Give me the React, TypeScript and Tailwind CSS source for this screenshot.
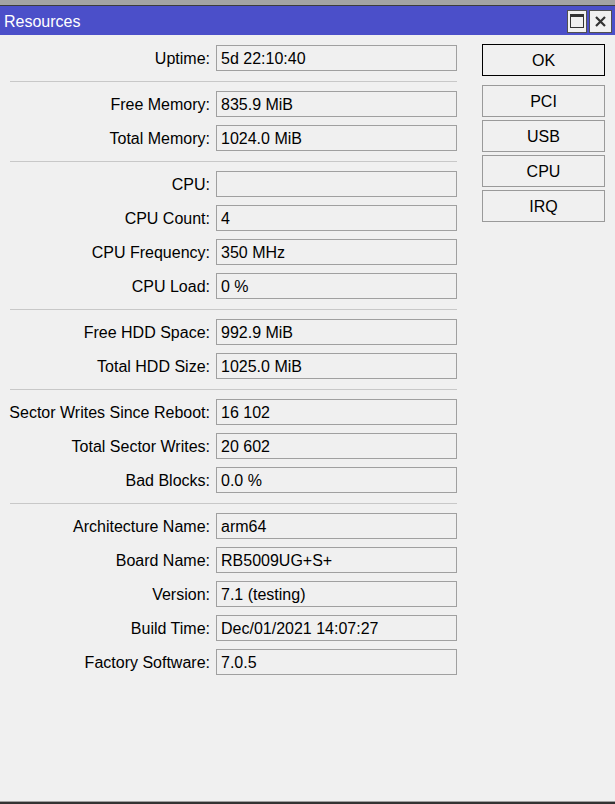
import React from 'react'

type Row = { label: string; value: string }

// groups are split by an etched separator line
const groups: Row[][] = [
  [{ label: 'Uptime', value: '5d 22:10:40' }],
  [
    { label: 'Free Memory', value: '835.9 MiB' },
    { label: 'Total Memory', value: '1024.0 MiB' },
  ],
  [
    { label: 'CPU', value: '' },
    { label: 'CPU Count', value: '4' },
    { label: 'CPU Frequency', value: '350 MHz' },
    { label: 'CPU Load', value: '0 %' },
  ],
  [
    { label: 'Free HDD Space', value: '992.9 MiB' },
    { label: 'Total HDD Size', value: '1025.0 MiB' },
  ],
  [
    { label: 'Sector Writes Since Reboot', value: '16 102' },
    { label: 'Total Sector Writes', value: '20 602' },
    { label: 'Bad Blocks', value: '0.0 %' },
  ],
  [
    { label: 'Architecture Name', value: 'arm64' },
    { label: 'Board Name', value: 'RB5009UG+S+' },
    { label: 'Version', value: '7.1 (testing)' },
    { label: 'Build Time', value: 'Dec/01/2021 14:07:27' },
    { label: 'Factory Software', value: '7.0.5' },
  ],
]

function Field({ label, value }: Row) {
  return (
    <div className="flex items-center h-[26px]">
      <span className="w-[201px] pt-[2px] text-right whitespace-nowrap leading-none">{label}:</span>
      <div className="ml-[6px] w-[241px] h-[26px] border border-[#a0a0a0] flex items-center pl-[4px] pt-[2px] leading-none whitespace-nowrap">
        {value}
      </div>
    </div>
  )
}

function SideButton({ label, primary }: { label: string; primary?: boolean }) {
  return (
    <button
      className={
        'w-[123px] h-[32px] flex items-center justify-center pt-[2px] bg-[#f0f0f0] leading-none ' +
        (primary ? 'border border-[#000]' : 'border border-[#9a9a9a]')
      }
    >
      {label}
    </button>
  )
}

export default function App() {
  return (
    <div className="w-[615px] h-[804px] flex flex-col bg-[#f0f0f0] text-[16px] text-black font-['Liberation_Sans',Arial,sans-serif] overflow-hidden">
      <div className="h-[5px] bg-[#a3a3a3]" />
      <div className="h-px bg-[#3c3c3c]" />

      {/* title bar */}
      <div className="h-[29px] bg-[#4b4fc9] flex items-center justify-between pl-[4px] pr-[3px]">
        <span className="text-white leading-none pt-[3px]">Resources</span>
        <div className="flex gap-[2px] pt-[1px]">
          <div className="w-[20px] h-[23px] bg-[#f0f0f0] border border-[#505050] flex items-center justify-center">
            <div className="w-[14px] h-[14px] border border-[#333] border-t-[3px]" />
          </div>
          <div className="w-[23px] h-[23px] bg-[#f0f0f0] border border-[#505050] flex items-center justify-center">
            <svg width="13" height="13" viewBox="0 0 13 13">
              <path d="M2 2 L11 11 M11 2 L2 11" stroke="#333" strokeWidth="2.2" />
            </svg>
          </div>
        </div>
      </div>

      {/* body */}
      <div className="flex-1 flex items-start pl-[9px]">
        <div className="w-[448px] pt-[10px] flex flex-col">
          {groups.map((g, i) => (
            <React.Fragment key={i}>
              {i > 0 && <div className="ml-px mt-[10px] mb-[9px] h-px bg-[#c8c8c8]" />}
              <div className="flex flex-col gap-[8px]">
                {g.map((r) => (
                  <Field key={r.label} {...r} />
                ))}
              </div>
            </React.Fragment>
          ))}
        </div>

        <div className="ml-[25px] pt-[9px] flex flex-col">
          <SideButton label="OK" primary />
          <div className="mt-[9px] flex flex-col gap-[3px]">
            <SideButton label="PCI" />
            <SideButton label="USB" />
            <SideButton label="CPU" />
            <SideButton label="IRQ" />
          </div>
        </div>
      </div>

      <div className="h-px bg-[#a0a0a0]" />
      <div className="h-[2px] bg-[#333]" />
    </div>
  )
}
